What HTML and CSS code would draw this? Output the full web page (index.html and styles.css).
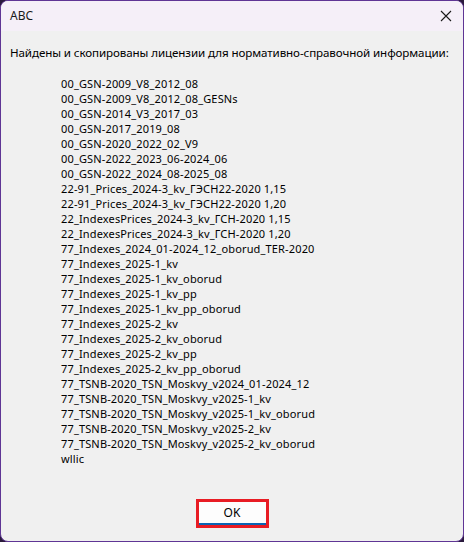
FILE: index.html
```html
<!DOCTYPE html>
<html lang="ru">
<head>
<meta charset="utf-8">
<link rel="stylesheet" href="styles.css">
</head>
<body>
<div class="window">
  <div class="titlebar">
    <span class="title">ABC</span>
    <span class="close">
      <svg width="12" height="12" viewBox="0 0 12 12"><path d="M1 1 L11 11 M11 1 L1 11" stroke="#1a1a1a" stroke-width="1.1" fill="none"/></svg>
    </span>
  </div>
  <div class="content">
    <p class="message">Найдены и скопированы лицензии для нормативно-справочной информации:</p>
    <ul class="list">
      <li>00_GSN-2009_V8_2012_08</li>
      <li>00_GSN-2009_V8_2012_08_GESNs</li>
      <li>00_GSN-2014_V3_2017_03</li>
      <li>00_GSN-2017_2019_08</li>
      <li>00_GSN-2020_2022_02_V9</li>
      <li>00_GSN-2022_2023_06-2024_06</li>
      <li>00_GSN-2022_2024_08-2025_08</li>
      <li>22-91_Prices_2024-3_kv_ГЭСН22-2020 1,15</li>
      <li>22-91_Prices_2024-3_kv_ГЭСН22-2020 1,20</li>
      <li>22_IndexesPrices_2024-3_kv_ГСН-2020 1,15</li>
      <li>22_IndexesPrices_2024-3_kv_ГСН-2020 1,20</li>
      <li>77_Indexes_2024_01-2024_12_oborud_TER-2020</li>
      <li>77_Indexes_2025-1_kv</li>
      <li>77_Indexes_2025-1_kv_oborud</li>
      <li>77_Indexes_2025-1_kv_pp</li>
      <li>77_Indexes_2025-1_kv_pp_oborud</li>
      <li>77_Indexes_2025-2_kv</li>
      <li>77_Indexes_2025-2_kv_oborud</li>
      <li>77_Indexes_2025-2_kv_pp</li>
      <li>77_Indexes_2025-2_kv_pp_oborud</li>
      <li>77_TSNB-2020_TSN_Moskvy_v2024_01-2024_12</li>
      <li>77_TSNB-2020_TSN_Moskvy_v2025-1_kv</li>
      <li>77_TSNB-2020_TSN_Moskvy_v2025-1_kv_oborud</li>
      <li>77_TSNB-2020_TSN_Moskvy_v2025-2_kv</li>
      <li>77_TSNB-2020_TSN_Moskvy_v2025-2_kv_oborud</li>
      <li>wllic</li>
    </ul>
    <div class="actions">
      <div class="focus-ring"><button class="ok">OK</button></div>
    </div>
  </div>
</div>
</body>
</html>
```
FILE: styles.css
```css
html, body {
  margin: 0;
  padding: 0;
  width: 464px;
  height: 542px;
  background: #2a1a3c;
  overflow: hidden;
}
.window {
  box-sizing: border-box;
  width: 464px;
  height: 542px;
  border: 1px solid #5f3595;
  border-radius: 8px;
  background: #f0f0f0;
  overflow: hidden;
  display: flex;
  flex-direction: column;
  font-family: "Noto Sans", "Open Sans", sans-serif;
  font-size: 12px;
  color: #000;
}
.titlebar {
  height: 30px;
  background: #f5eff8;
  display: flex;
  align-items: center;
  justify-content: space-between;
  padding: 0 11px 0 9px;
  flex-shrink: 0;
}
.title {
  font-size: 12px;
  color: #1a1a1a;
  line-height: 1;
}
.close {
  display: flex;
  align-items: center;
}
.content {
  flex: 1;
  display: flex;
  flex-direction: column;
  padding: 0 9px;
}
.message {
  margin: 14px 0 0 0;
  line-height: 15px;
  white-space: nowrap;
  font-size: 11.6px;
  letter-spacing: -0.1px;
}
.list {
  list-style: none;
  margin: 16px 0 0 0;
  padding: 0 0 0 51px;
  font-size: 11px;
  letter-spacing: 0.15px;
  line-height: 15px;
  white-space: nowrap;
}
.list li {
  height: 15px;
}
.actions {
  display: flex;
  justify-content: center;
  margin-top: 33px;
}
.focus-ring {
  border: 3px solid #e81c24;
}
.ok {
  display: block;
  width: 67px;
  height: 23px;
  box-sizing: border-box;
  border: none;
  border-bottom: 2px solid #0a64b4;
  background: #fdfdfd;
  font-family: "Noto Sans", "Open Sans", sans-serif;
  font-size: 12px;
  color: #000;
  padding: 0;
  margin: 0;
}
```
